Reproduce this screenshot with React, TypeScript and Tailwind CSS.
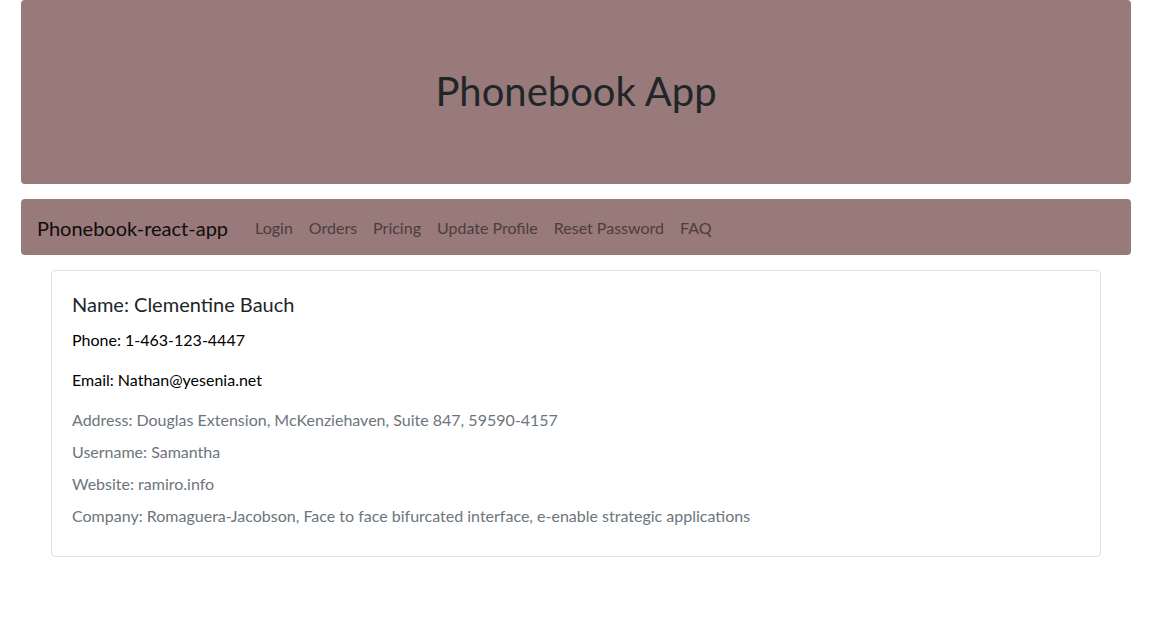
const links = ["Login", "Orders", "Pricing", "Update Profile", "Reset Password", "FAQ"];

export default function App() {
  return (
    <div className="min-h-screen bg-white font-['Lato',sans-serif] text-[#212529]">
      <div className="ml-[21px] flex w-[1110px] flex-col gap-[15px]">
        <header className="flex h-[184px] items-center justify-center rounded bg-[#987a7a] pb-[2px]">
          <h1 className="text-[40px] leading-[48px] font-normal">Phonebook App</h1>
        </header>

        <nav className="flex h-14 items-center rounded bg-[#987a7a] px-4 pt-[2px]">
          <span className="mr-[19px] text-xl leading-[30px] text-[#0f0c0c]">Phonebook-react-app</span>
          {links.map((l) => (
            <a key={l} className="px-2 text-base leading-6 text-[#4c3d3d]">
              {l}
            </a>
          ))}
        </nav>

        <div className="mx-[30px] rounded border border-[#dfdfdf] px-5 pt-[21px] pb-5">
          <h5 className="mb-3 text-xl leading-6">Name: Clementine Bauch</h5>
          <p className="mb-4 text-base leading-6 text-black">Phone: 1-463-123-4447</p>
          <p className="mb-4 text-base leading-6 text-black">Email: Nathan@yesenia.net</p>
          <p className="mb-2 leading-6 text-[#6c757d]">
            Address: Douglas Extension, McKenziehaven, Suite 847, 59590-4157
          </p>
          <p className="mb-2 leading-6 text-[#6c757d]">Username: Samantha</p>
          <p className="mb-2 leading-6 text-[#6c757d]">Website: ramiro.info</p>
          <p className="mb-2 leading-6 text-[#6c757d]">
            Company: Romaguera-Jacobson, Face to face bifurcated interface, e-enable strategic applications
          </p>
        </div>
      </div>
    </div>
  );
}
